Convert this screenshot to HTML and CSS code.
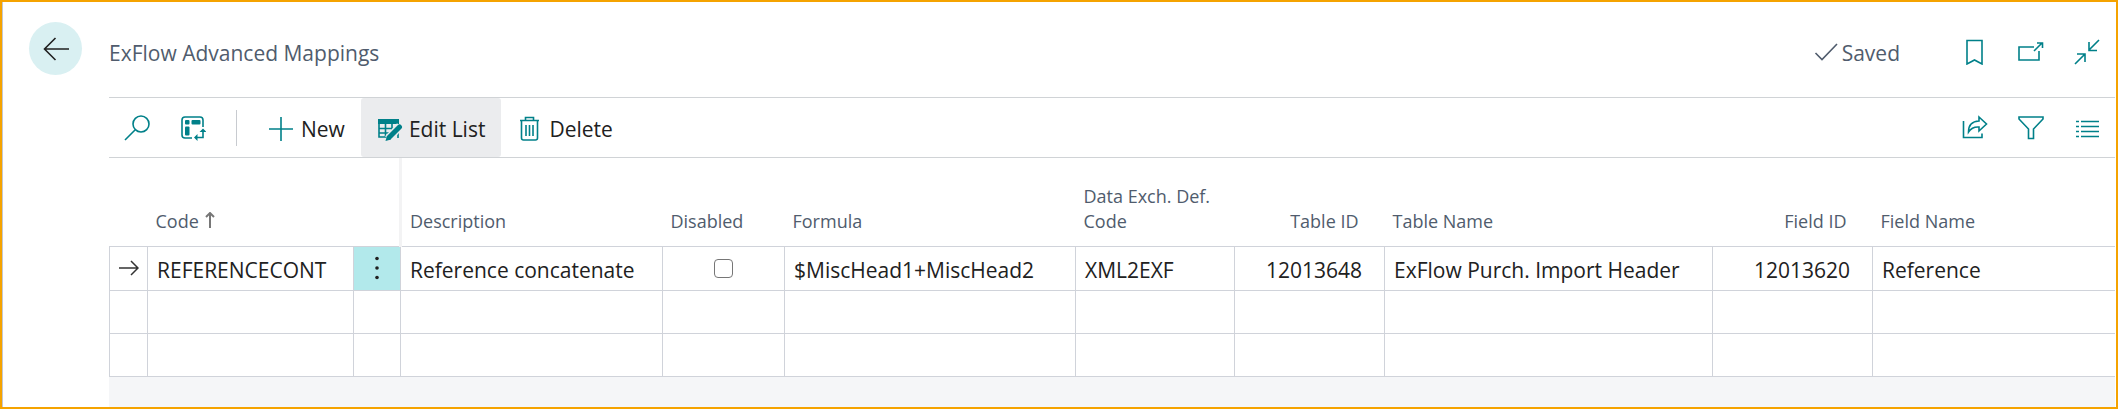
FILE: index.html
```html
<!DOCTYPE html>
<html lang="en">
<head>
<meta charset="utf-8">
<title>ExFlow Advanced Mappings</title>
<link rel="stylesheet" href="styles.css">
</head>
<body>
<div class="page">
  <header class="page-header">
    <button class="back" type="button" aria-label="Back">
      <svg class="icon" viewBox="0 0 26 26"><path d="M26 13H1M12.500 2L1.500 13l11 11"/></svg>
    </button>
    <h1 class="title">ExFlow Advanced Mappings</h1>
    <span class="saved"><svg class="icon icon-check" viewBox="0 0 24 24"><path d="M1.500 12L8 18.500 23 3"/></svg>Saved</span>
    <div class="header-icons">
      <button class="icon-button" type="button" aria-label="Bookmark">
        <svg class="icon" viewBox="0 0 26 26"><path d="M5 1.500h15V25l-7.500-4L5 25z"/></svg>
      </button>
      <button class="icon-button" type="button" aria-label="Open in new window">
        <svg class="icon" viewBox="0 0 26 26"><path d="M16 8H1v13h20v-9M16 12l8-8M19 4h5.500v5"/></svg>
      </button>
      <button class="icon-button" type="button" aria-label="Exit wide view">
        <svg class="icon" viewBox="0 0 26 26"><path d="M25 1L15 11M15 3v8.500h8M1 25l10-10M3 15h8v8"/></svg>
      </button>
    </div>
  </header>

  <main class="content">
    <div class="toolbar" role="toolbar" aria-label="Actions">
      <button class="icon-button" type="button" aria-label="Search">
        <svg class="icon" viewBox="0 0 26 26"><circle cx="17" cy="9" r="8"/><path d="M11 15L1 25"/></svg>
      </button>
      <button class="icon-button" type="button" aria-label="Analyze">
        <svg class="icon" viewBox="0 0 26 26"><path d="M23 12V5q0-3-3-3H5Q2 2 2 5v15q0 3 3 3h7"/><path d="M23 16v6.500h-6"/><path class="solid" d="M19.500 17L23 13.500l3.500 3.500zM17.500 19v7L14 22.500z"/><rect class="solid" x="5" y="5" width="4.500" height="4.500" rx="1"/><rect class="solid" x="11.500" y="5" width="9" height="4.500" rx="1"/><rect class="solid" x="5" y="11.500" width="4.500" height="9" rx="1"/></svg>
      </button>
      <span class="divider"></span>
      <button class="action" type="button"><svg class="icon" viewBox="0 0 26 26"><path d="M12 1v24M0 13h24"/></svg>New</button>
      <button class="action action-active" type="button"><svg class="icon" viewBox="0 0 26 26"><path class="solid" d="M1 3h21v5H1z"/><path d="M2 8v13h9M2 12.500h15M2 17h11M8.500 8v13M15 8v7M21 17v5"/><path class="halo" d="M11 23L23 10"/><path class="pencil" d="M12.500 21L22.500 11"/><path class="solid" d="M8.500 25l1.500-5.500 4 4z"/></svg>Edit List</button>
      <button class="action" type="button"><svg class="icon" viewBox="0 0 26 26"><path d="M3 4.500h19M8.500 4V1.500h8V4M4.500 4.500V22q0 2 2 2h12q2 0 2-2V4.500M9 9v11M12.500 9v11M16 9v11"/></svg>Delete</button>
      <div class="toolbar-end">
        <button class="icon-button" type="button" aria-label="Share">
          <svg class="icon" viewBox="0 0 26 26"><path d="M1.500 6v16.500h18.500v-4"/><path d="M17 2l7.500 7L17 16v-4Q10 11.500 6.500 17 6.500 6.500 17 6z"/></svg>
        </button>
        <button class="icon-button" type="button" aria-label="Filter">
          <svg class="icon" viewBox="0 0 26 26"><path d="M1 2h24v2l-9.500 10v9.500h-5V14L1 4z"/></svg>
        </button>
        <button class="icon-button" type="button" aria-label="Show as list">
          <svg class="icon" viewBox="0 0 26 26"><path d="M2 6.500h3M7 6.500h18M2 11.500h3M7 11.500h18M2 16.500h3M7 16.500h18M2 21.500h3M7 21.500h18"/></svg>
        </button>
      </div>
    </div>

    <table class="grid">
      <colgroup>
        <col class="c-mark"><col class="c-code"><col class="c-menu"><col class="c-desc"><col class="c-disabled"><col class="c-formula"><col class="c-def"><col class="c-table-id"><col class="c-table-name"><col class="c-field-id"><col>
      </colgroup>
      <thead>
        <tr>
          <td></td>
          <th scope="col" aria-sort="ascending"><span class="sorted">Code<svg class="icon-sort" viewBox="0 0 10 18"><path d="M5 16V1M1 5l4-4 4 4"/></svg></span></th>
          <td class="frozen"></td>
          <th scope="col">Description</th>
          <th scope="col">Disabled</th>
          <th scope="col">Formula</th>
          <th scope="col">Data Exch. Def. Code</th>
          <th scope="col" class="number">Table ID</th>
          <th scope="col">Table Name</th>
          <th scope="col" class="number">Field ID</th>
          <th scope="col">Field Name</th>
        </tr>
      </thead>
      <tbody>
        <tr>
          <td class="mark"><svg class="icon-row" viewBox="0 0 20 16"><path d="M0 8h19M12 1l7 7-7 7"/></svg></td>
          <td>REFERENCECONT</td>
          <td class="menu"><button class="row-menu" type="button" aria-label="Show more options"><svg class="icon-dots" viewBox="0 0 4 24"><circle cx="2" cy="2.500" r="1.800"/><circle cx="2" cy="12" r="1.800"/><circle cx="2" cy="21.500" r="1.800"/></svg></button></td>
          <td>Reference concatenate</td>
          <td class="check"><input type="checkbox" class="box" aria-label="Disabled"></td>
          <td>$MiscHead1+MiscHead2</td>
          <td>XML2EXF</td>
          <td class="number">12013648</td>
          <td>ExFlow Purch. Import Header</td>
          <td class="number">12013620</td>
          <td>Reference</td>
        </tr>
        <tr><td></td><td></td><td></td><td></td><td></td><td></td><td></td><td></td><td></td><td></td><td></td></tr>
        <tr><td></td><td></td><td></td><td></td><td></td><td></td><td></td><td></td><td></td><td></td><td></td></tr>
      </tbody>
    </table>
    <div class="grid-rest"></div>
  </main>
</div>
</body>
</html>
```
FILE: styles.css
```css
* {
  box-sizing: border-box;
}

body {
  margin: 0;
  background: #fff;
  color: #212121;
  font-family: "Segoe UI", "Open Sans", "Noto Sans", sans-serif;
  font-size: 21px;
  line-height: 28px;
}

button {
  margin: 0;
  padding: 0;
  border: 0;
  background: none;
  color: inherit;
  font: inherit;
}

.page {
  display: flex;
  flex-direction: column;
  min-height: 100vh;
  border: 2px solid #f5a300;
  box-shadow: inset 1px 0 #c3c7d0;
}

.icon {
  flex: none;
  width: 26px;
  height: 26px;
  fill: none;
  stroke: #008089;
  stroke-width: 1.6;
}

.icon .solid {
  fill: #008089;
  stroke: none;
}

.icon .halo {
  stroke: #ebecee;
  stroke-width: 8;
}

.icon .pencil {
  stroke-width: 5;
  stroke-linecap: round;
}

.page-header {
  display: flex;
  align-items: center;
  height: 95px;
  padding: 0 16px 0 27px;
}

.back {
  display: flex;
  align-items: center;
  justify-content: center;
  width: 53px;
  height: 53px;
  margin: 0 27px 2px 0;
  border-radius: 50%;
  background: #d9f0f2;
}

.back .icon {
  stroke: #212121;
}

.title {
  margin: 6px 0 0;
  color: #505c6d;
  font-size: 21px;
  font-weight: 400;
}

.saved {
  display: flex;
  align-items: center;
  gap: 4px;
  margin: 6px 0 0 auto;
  color: #505c6d;
}

.icon-check {
  width: 24px;
  height: 24px;
  stroke: #505c6d;
}

.header-icons,
.toolbar-end {
  display: flex;
  gap: 30px;
}

.header-icons {
  margin: 4px 0 0 62px;
}

.icon-button {
  display: flex;
  align-items: center;
}

.content {
  display: flex;
  flex: 1;
  flex-direction: column;
  margin: 0 1px 0 107px;
}

.toolbar {
  display: flex;
  align-items: center;
  height: 61px;
  padding: 0 15px;
  border-top: 1px solid #d0d3d6;
  border-bottom: 1px solid #d0d3d6;
}

.toolbar > .icon-button {
  margin-right: 30px;
}

.divider {
  width: 1px;
  height: 36px;
  margin-right: 16px;
  background: #c8cbd0;
}

.action {
  display: flex;
  align-items: center;
  gap: 6px;
  height: 59px;
  padding: 2px 16px 0;
  border-radius: 3px;
}

.action-active {
  background: #ebecee;
}

.toolbar-end {
  margin-left: auto;
}

.grid {
  width: 100%;
  border-collapse: collapse;
  table-layout: fixed;
}

.c-mark { width: 38px; }
.c-code { width: 206px; }
.c-menu { width: 47px; }
.c-desc { width: 262px; }
.c-disabled { width: 122px; }
.c-formula { width: 291px; }
.c-def { width: 159px; }
.c-table-id { width: 150px; }
.c-table-name { width: 328px; }
.c-field-id { width: 160px; }

.grid thead tr {
  height: 88px;
}

.grid th {
  padding: 0 8px 12px;
  color: #505c6d;
  font-size: 18px;
  font-weight: 400;
  line-height: 25px;
  text-align: left;
  vertical-align: bottom;
}

.grid .frozen {
  border-right: 3px solid #f3f3f4;
}

.sorted {
  display: flex;
  align-items: center;
  gap: 6px;
}

.icon-sort {
  width: 10px;
  height: 18px;
  fill: none;
  stroke: #777;
  stroke-width: 2;
}

.grid tbody tr {
  height: 43px;
}

.grid tbody tr:first-child {
  height: 44px;
}

.grid tbody td {
  padding: 3px 8px 0 9px;
  border: 1px solid #d0d3da;
  white-space: nowrap;
}

.grid tbody td:last-child {
  border-right: 0;
}

.grid th.number {
  padding-right: 26px;
  text-align: right;
}

.grid tbody .number {
  padding-right: 22px;
  text-align: right;
}

.grid tbody .mark,
.grid tbody .menu,
.grid tbody .check {
  padding: 0;
  text-align: center;
}

.grid tbody .menu {
  background: #b2e9eb;
}

.icon-row {
  display: block;
  width: 20px;
  height: 16px;
  margin: 0 auto;
  fill: none;
  stroke: #333;
  stroke-width: 1.5;
}

.row-menu {
  display: flex;
  align-items: center;
  justify-content: center;
  width: 100%;
  height: 43px;
}

.icon-dots {
  width: 4px;
  height: 24px;
  fill: #212121;
}

.box {
  display: block;
  width: 19px;
  height: 19px;
  margin: 0 auto;
  border: 1px solid #767676;
  border-radius: 4px;
  background: #fff;
  appearance: none;
}

.grid-rest {
  flex: 1;
  background: #f5f6f8;
}
```
